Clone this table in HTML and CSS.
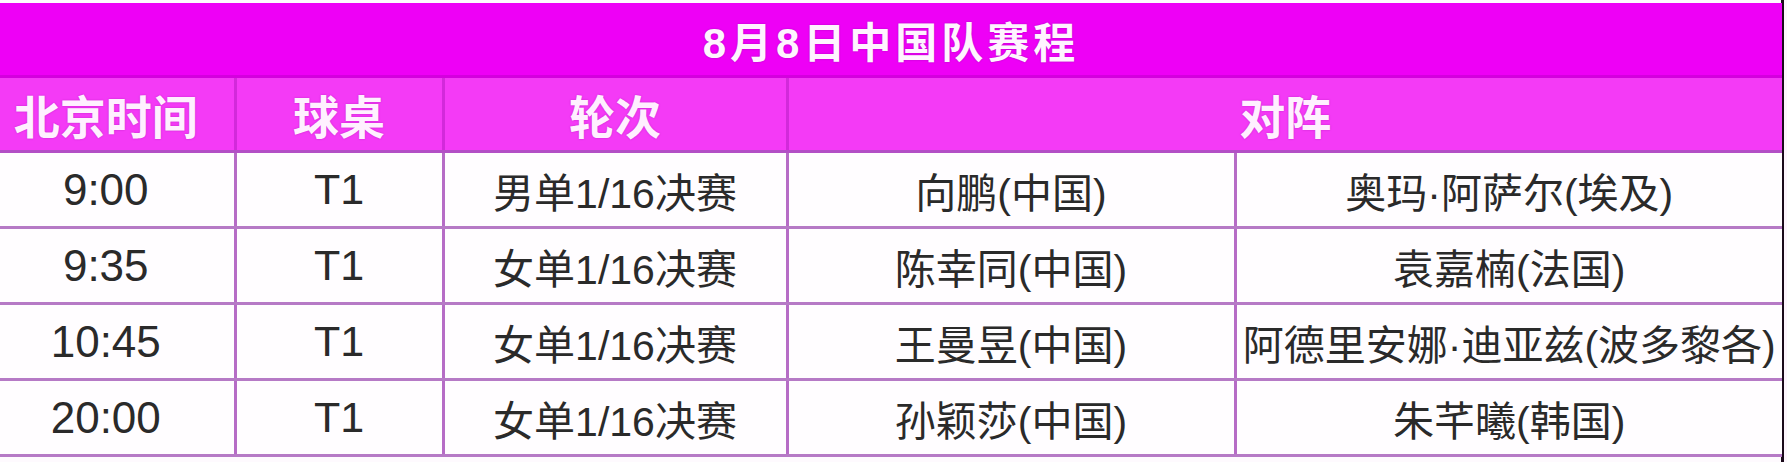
FILE: index.html
```html
<!DOCTYPE html>
<html lang="zh-CN">
<head>
<meta charset="utf-8">
<title>8月8日中国队赛程</title>
<link rel="stylesheet" href="styles.css">
</head>
<body>
<div class="frame">
<table class="schedule">
  <colgroup>
    <col class="c-time">
    <col class="c-table">
    <col class="c-round">
    <col class="c-home">
    <col class="c-away">
  </colgroup>
  <thead>
    <tr class="title-row"><th colspan="5">8月8日中国队赛程</th></tr>
    <tr class="head-row">
      <th>北京时间</th>
      <th>球桌</th>
      <th>轮次</th>
      <th colspan="2">对阵</th>
    </tr>
  </thead>
  <tbody>
    <tr><td>9:00</td><td>T1</td><td>男单1/16决赛</td><td>向鹏(中国)</td><td>奥玛·阿萨尔(埃及)</td></tr>
    <tr><td>9:35</td><td>T1</td><td>女单1/16决赛</td><td>陈幸同(中国)</td><td>袁嘉楠(法国)</td></tr>
    <tr><td>10:45</td><td>T1</td><td>女单1/16决赛</td><td>王曼昱(中国)</td><td>阿德里安娜·迪亚兹(波多黎各)</td></tr>
    <tr><td>20:00</td><td>T1</td><td>女单1/16决赛</td><td>孙颖莎(中国)</td><td>朱芊曦(韩国)</td></tr>
  </tbody>
</table>
</div>
</body>
</html>
```
FILE: styles.css
```css
html, body {
  margin: 0;
  padding: 0;
  background: #fdf6fd;
}
body {
  width: 1787px;
  height: 462px;
  overflow: hidden;
  font-family: "Liberation Sans", "Noto Sans CJK SC", sans-serif;
}
.frame {
  display: flex;
  padding-top: 3px;
  border-right: 3px solid #1a0a1a;
  width: 1784px;
  box-sizing: border-box;
  height: 462px;
  background: #fefafe;
}
.schedule {
  table-layout: fixed;
  border-collapse: collapse;
  width: 1782px;
  height: 452px;
}
.c-time { width: 235px; }
.c-table { width: 208px; }
.c-round { width: 344px; }
.c-home { width: 448px; }
.c-away { width: 547px; }

.title-row th {
  height: 72px;
  background: #ee00f6;
  color: #fff4ff;
  font-family: "Liberation Sans", "Noto Sans CJK SC", sans-serif;
  font-weight: 700;
  font-size: 42px;
  letter-spacing: 4px;
  padding: 0;
  border-bottom: 3px solid #d400de;
  text-shadow: 0 0 2px #b000c0;
}
.head-row th {
  height: 72px;
  background: #f43af6;
  color: #fff0ff;
  font-family: "Noto Sans CJK SC", sans-serif;
  font-weight: 700;
  font-size: 46px;
  letter-spacing: 0;
  padding: 0;
  border-left: 3px solid #d22ada;
  border-bottom: 3px solid #b34fc6;
  text-shadow: 0 0 2px #c020c8;
}
.head-row th:first-child {
  border-left: 0;
  padding-right: 22px;
}

td {
  height: 73px;
  padding: 0;
  text-align: center;
  color: #2a2a2a;
  font-size: 41px;
  font-family: "Liberation Sans", "Noto Sans CJK SC", sans-serif;
  border-left: 3px solid #b66cc6;
  border-bottom: 3px solid #b67ac6;
  background: #fffdff;
  white-space: nowrap;
  overflow: visible;
}
td:first-child {
  border-left: 0;
  padding-right: 22px;
  font-size: 44px;
}
td:nth-child(2) { font-size: 43px; }
```
